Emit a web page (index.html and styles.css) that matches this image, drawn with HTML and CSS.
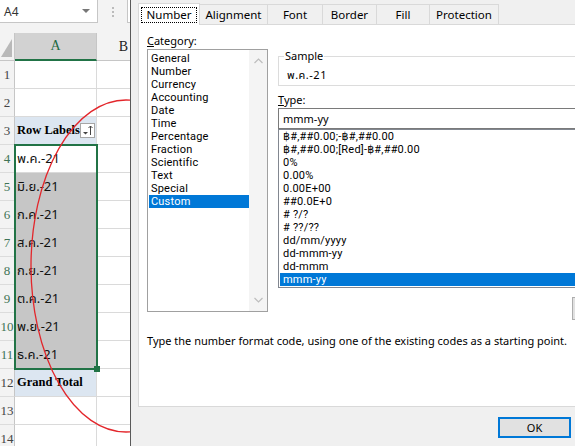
FILE: index.html
```html
<!DOCTYPE html>
<html lang="th">
<head>
  <meta charset="UTF-8">
  <meta name="viewport" content="width=device-width, initial-scale=1.0">
  <title>Format Cells</title>
  <link rel="stylesheet" href="styles.css">
</head>
<body>
<div class="screen">

  <!-- spreadsheet behind the dialog -->
  <div class="sheet">
    <div class="formula-bar">
      <div class="name-box">A4<span class="caret"></span></div>
      <div class="grip">
        <svg width="4" height="12" viewBox="0 0 4 12"><circle cx="2" cy="2" r="1" fill="#a8a8a8"/><circle cx="2" cy="6" r="1" fill="#a8a8a8"/><circle cx="2" cy="10" r="1" fill="#a8a8a8"/></svg>
      </div>
      <div class="fx-box"></div>
    </div>

    <div class="grid">
      <div class="col heads">
        <div class="corner">
          <svg width="14" height="27" viewBox="0 0 14 27"><polygon points="1,24 12,24 12,6" fill="#b9b9b9"/></svg>
        </div>
        <div class="rh">1</div>
        <div class="rh">2</div>
        <div class="rh">3</div>
        <div class="rh on">4</div>
        <div class="rh on">5</div>
        <div class="rh on">6</div>
        <div class="rh on">7</div>
        <div class="rh on">8</div>
        <div class="rh on">9</div>
        <div class="rh on">10</div>
        <div class="rh on">11</div>
        <div class="rh">12</div>
        <div class="rh">13</div>
        <div class="rh">14</div>
      </div>

      <div class="col col-a">
        <div class="ch ch-active">A</div>
        <div class="cell"></div>
        <div class="cell"></div>
        <div class="cell pivot">Row Labels
          <svg class="filter" width="15" height="15" viewBox="0 0 15 15">
            <rect x="0.5" y="0.5" width="14" height="14" fill="#fff" stroke="#a6a6a6"/>
            <polygon points="3,9 8,9 5.5,11.5" fill="#444"/>
            <line x1="10.5" y1="3" x2="10.5" y2="12" stroke="#444"/>
            <polyline points="8.5,5 10.5,3 12.5,5" fill="none" stroke="#444"/>
          </svg>
        </div>
        <div class="selection">
          <div class="cell">พ.ค.-21</div>
          <div class="cell sel">มิ.ย.-21</div>
          <div class="cell sel">ก.ค.-21</div>
          <div class="cell sel">ส.ค.-21</div>
          <div class="cell sel">ก.ย.-21</div>
          <div class="cell sel">ต.ค.-21</div>
          <div class="cell sel">พ.ย.-21</div>
          <div class="cell sel">ธ.ค.-21</div>
          <span class="fill-handle"></span>
        </div>
        <div class="cell pivot">Grand Total</div>
        <div class="cell"></div>
        <div class="cell"></div>
      </div>

      <div class="col col-b">
        <div class="ch">B</div>
        <div class="cell"></div>
        <div class="cell"></div>
        <div class="cell"></div>
        <div class="cell"></div>
        <div class="cell"></div>
        <div class="cell"></div>
        <div class="cell"></div>
        <div class="cell"></div>
        <div class="cell"></div>
        <div class="cell"></div>
        <div class="cell"></div>
        <div class="cell"></div>
        <div class="cell"></div>
        <div class="cell"></div>
      </div>
    </div>

    <svg class="mark" width="130" height="446" viewBox="0 0 130 446">
      <ellipse cx="126" cy="266" rx="95" ry="166" fill="none" stroke="#e3262b" stroke-width="1.3"/>
    </svg>
  </div>

  <!-- Format Cells dialog -->
  <div class="dialog">
    <div class="tabs">
      <div class="tab active"><span class="focus">Number</span></div>
      <div class="tab t-align">Alignment</div>
      <div class="tab t-font">Font</div>
      <div class="tab t-border">Border</div>
      <div class="tab t-fill">Fill</div>
      <div class="tab t-prot">Protection</div>
    </div>

    <div class="panel">
      <div class="panel-top">
        <div class="category">
          <div class="label"><u>C</u>ategory:</div>
          <div class="listbox cat-list">
            <ul>
              <li>General</li>
              <li>Number</li>
              <li>Currency</li>
              <li>Accounting</li>
              <li>Date</li>
              <li>Time</li>
              <li>Percentage</li>
              <li>Fraction</li>
              <li>Scientific</li>
              <li>Text</li>
              <li>Special</li>
              <li class="selected">Custom</li>
            </ul>
            <div class="scroll">
              <svg width="9" height="6" viewBox="0 0 9 6"><polyline points="0.5,5 4.5,1 8.5,5" fill="none" stroke="#bdbdbd" stroke-width="1.2"/></svg>
              <svg width="9" height="6" viewBox="0 0 9 6"><polyline points="0.5,1 4.5,5 8.5,1" fill="none" stroke="#bdbdbd" stroke-width="1.2"/></svg>
            </div>
          </div>
        </div>

        <div class="format">
          <fieldset class="sample">
            <legend>Sample</legend>
            <div class="sample-value">พ.ค.-21</div>
          </fieldset>
          <div class="label type-label"><u>T</u>ype:</div>
          <div class="type-input">mmm-yy</div>
          <div class="listbox code-list">
            <ul>
              <li>฿#,##0.00;-฿#,##0.00</li>
              <li>฿#,##0.00;[Red]-฿#,##0.00</li>
              <li>0%</li>
              <li>0.00%</li>
              <li>0.00E+00</li>
              <li>##0.0E+0</li>
              <li># ?/?</li>
              <li># ??/??</li>
              <li>dd/mm/yyyy</li>
              <li>dd-mmm-yy</li>
              <li>dd-mmm</li>
              <li class="selected">mmm-yy</li>
            </ul>
          </div>
          <div class="list-actions"><button class="btn side">Delete</button></div>
        </div>
      </div>
      <p class="hint">Type the number format code, using one of the existing codes as a starting point.</p>
    </div>

    <div class="footer">
      <button class="btn default">OK</button>
      <button class="btn">Cancel</button>
    </div>
  </div>

</div>
</body>
</html>
```

FILE: styles.css
```css
* {
  box-sizing: border-box;
}
body {
  margin: 0;
  background: #fff;
  font-family: "Noto Sans", "Open Sans", "Noto Sans Thai", "DejaVu Sans", sans-serif;
  font-size: 11px;
  color: #000;
}
.screen {
  width: 575px;
  height: 446px;
  overflow: hidden;
  display: flex;
}

/* ---------- sheet ---------- */
.sheet {
  position: relative;
  flex: none;
  width: 130px;
  overflow: hidden;
  background: #fff;
}
.formula-bar {
  height: 33px;
  background: #f3f3f3;
  display: flex;
  align-items: flex-start;
}
.name-box {
  width: 98px;
  height: 23px;
  background: #fff;
  border-right: 1px solid #c6c6c6;
  border-bottom: 1px solid #c6c6c6;
  display: flex;
  align-items: center;
  justify-content: space-between;
  padding: 0 7px 0 4px;
  font-size: 12px;
  color: #333;
}
.caret {
  border-left: 4px solid transparent;
  border-right: 4px solid transparent;
  border-top: 4px solid #777;
}
.grip {
  width: 29px;
  height: 23px;
  display: flex;
  align-items: center;
  justify-content: center;
}
.fx-box {
  flex: 1;
  height: 23px;
  background: #fff;
  border-left: 1px solid #c6c6c6;
  border-bottom: 1px solid #c6c6c6;
}

.grid {
  display: flex;
}
.col {
  flex: none;
  display: flex;
  flex-direction: column;
}
.heads {
  width: 15px;
}
.col-a {
  width: 82px;
}
.col-b {
  width: 54px;
}
.corner,
.ch {
  height: 28px;
  background: #f3f3f3;
  border-right: 1px solid #c6c6c6;
  border-bottom: 1px solid #c6c6c6;
}
.corner {
  display: flex;
  align-items: flex-end;
}
.ch {
  display: flex;
  align-items: center;
  justify-content: center;
  font: 14px "Liberation Serif", serif;
  color: #222;
}
.ch-active {
  background: #d2d2d2;
  color: #1f6b43;
  border-bottom: 2px solid #217346;
}
.rh {
  height: 28px;
  background: #f3f3f3;
  border-right: 1px solid #c6c6c6;
  border-bottom: 1px solid #dcdcdc;
  display: flex;
  align-items: center;
  justify-content: center;
  font: 13px "Liberation Serif", serif;
  color: #444;
}
.rh.on {
  color: #3f7356;
}
.cell {
  height: 28px;
  border-right: 1px solid #dadada;
  border-bottom: 1px solid #dadada;
  padding-left: 2px;
  display: flex;
  align-items: center;
  white-space: nowrap;
  font-family: "Noto Sans Thai", "Tahoma", "DejaVu Sans", "Noto Sans", sans-serif;
  font-size: 13px;
  color: #111;
}
.cell.sel {
  background: #c6c6c6;
  border-bottom-color: #c6c6c6;
}
.pivot {
  background: #dce6f1;
  font: bold 12.5px "Liberation Serif", serif;
  color: #000;
}
.filter {
  flex: none;
  margin-left: auto;
  margin-right: 1px;
}
.selection {
  position: relative;
  outline: 2px solid #217346;
  outline-offset: -1px;
}
.fill-handle {
  position: absolute;
  right: -3px;
  bottom: -3px;
  width: 6px;
  height: 6px;
  background: #217346;
  z-index: 1;
}
.mark {
  position: absolute;
  top: 0;
  left: 0;
  pointer-events: none;
}

/* ---------- dialog ---------- */
.dialog {
  flex: none;
  width: 530px;
  height: 446px;
  background: #f0f0f0;
  border-left: 1px solid #5a5a5a;
  padding: 3px 8px 0 7px;
}
.tabs {
  height: 21px;
  display: flex;
  align-items: flex-end;
}
.tab {
  height: 20px;
  margin-left: -1px;
  border: 1px solid #d9d9d9;
  border-bottom: none;
  background: #f0f0f0;
  display: flex;
  align-items: center;
  justify-content: center;
  font-size: 11.5px;
}
.tab.active {
  width: 62px;
  height: 22px;
  margin-left: 0;
  margin-bottom: -1px;
  background: #fff;
  position: relative;
  z-index: 1;
}
.focus {
  padding: 0 5px;
  line-height: 14px;
  outline: 1px dotted #000;
}
.t-align { width: 69px; }
.t-font { width: 56px; }
.t-border { width: 55px; }
.t-fill { width: 54px; }
.t-prot { width: 70px; }

.panel {
  width: 515px;
  height: 383px;
  background: #fff;
  border: 1px solid #d9d9d9;
  padding: 9px 0 0 8px;
}
.panel-top {
  display: flex;
  align-items: flex-start;
}
.label {
  line-height: 14px;
  margin-bottom: 1px;
}
.category {
  width: 121px;
}
.listbox {
  background: #fff;
  border: 1px solid #a0a0a0;
}
.listbox ul {
  list-style: none;
  margin: 0;
}
.listbox li {
  height: 13px;
  line-height: 13px;
  white-space: nowrap;
  font-family: Roboto, "Noto Sans", "DejaVu Sans", sans-serif;
  font-size: 11px;
  letter-spacing: 0.2px;
}
.listbox li.selected {
  background: #0078d7;
  color: #fff;
}
.cat-list {
  height: 263px;
  display: flex;
}
.cat-list ul {
  flex: 1;
  padding: 2px 0 0 1px;
}
.cat-list li {
  padding-left: 2px;
}
.scroll {
  width: 18px;
  background: #f4f4f4;
  display: flex;
  flex-direction: column;
  align-items: center;
  justify-content: space-between;
  padding: 8px 0 8px;
}

.format {
  width: 370px;
  margin-left: 10px;
  padding-top: 15px;
}
.sample {
  margin: 0;
  border: 1px solid #dcdcdc;
  padding: 6px 8px 2px;
  min-width: 0;
}
.sample legend {
  padding: 0 1px;
  margin-left: -3px;
  line-height: 14px;
}
.sample-value {
  line-height: 14px;
  font-family: "Noto Sans Thai", "DejaVu Sans", sans-serif;
  letter-spacing: 0.5px;
}
.type-label {
  margin-top: 7px;
}
.type-input {
  height: 21px;
  border: 1px solid #7a7a7a;
  padding-left: 4px;
  line-height: 19px;
}
.code-list {
  height: 159px;
  border-color: #828790;
}
.code-list ul {
  padding: 0 0 0 1px;
}
.code-list li {
  padding-left: 3px;
}
.list-actions {
  display: flex;
  justify-content: flex-end;
  margin-top: 9px;
}
.btn {
  width: 73px;
  height: 21px;
  background: #e1e1e1;
  border: 1px solid #adadad;
  font: inherit;
  color: #000;
  padding: 0;
}
.btn.side {
  width: 76px;
  height: 23px;
}
.btn.default {
  border: 2px solid #0078d7;
}
.hint {
  margin: 14px 0 0;
  line-height: 14px;
  white-space: nowrap;
}
.footer {
  display: flex;
  justify-content: flex-end;
  gap: 8px;
  padding-top: 10px;
}
```
